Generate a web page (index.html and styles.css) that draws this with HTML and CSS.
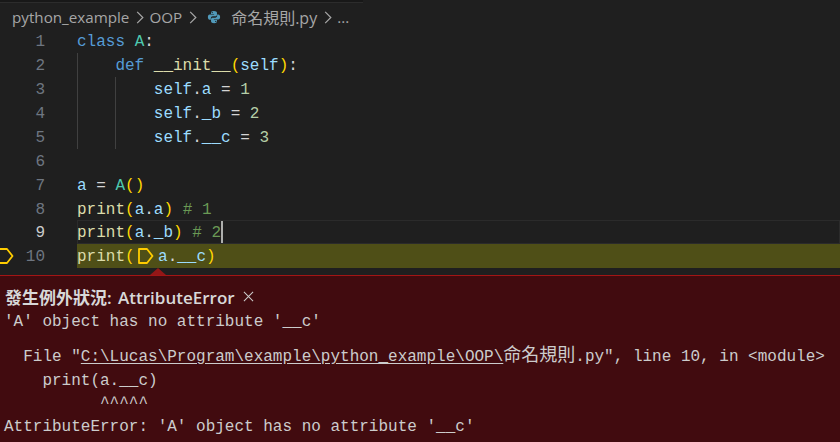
FILE: index.html
```html
<!DOCTYPE html>
<html lang="zh-Hant">
<head>
<meta charset="utf-8">
<title>命名規則.py</title>
<link rel="stylesheet" href="styles.css">
</head>
<body>
<div class="app">
  <div class="tabstrip"></div>
  <nav class="crumbs">
    <span>python_example</span>
    <svg class="chev" viewBox="0 0 8 16"><path d="M1 2l6 6-6 6"/></svg>
    <span>OOP</span>
    <svg class="chev" viewBox="0 0 8 16"><path d="M1 2l6 6-6 6"/></svg>
    <svg class="py" viewBox="0 0 16 16"><path d="M7.900 1C5 1 4.600 2 4.600 3.200v1.400h3.500v.6H3C1.800 5.200 1 6.300 1 8c0 1.800.8 3 2 3h1.400V9.300c0-1.200 1-2.200 2.200-2.200h3c1 0 1.800-.8 1.800-1.800V3.200C11.400 1.800 10 1 7.900 1zM6 2.200a.7.7 0 110 1.400.7.7 0 010-1.400z"/><path d="M8.100 15c2.900 0 3.300-1 3.300-2.200v-1.400H7.900v-.6H13c1.200 0 2-1.100 2-2.800 0-1.800-.8-3-2-3h-1.400v1.700c0 1.200-1 2.200-2.200 2.200h-3c-1 0-1.800.8-1.800 1.800v2.100C4.600 14.200 6 15 8.100 15zm1.900-1.200a.7.700 0 110-1.400.7.700 0 010 1.400z"/></svg>
    <span class="crumb-file">命名規則.py</span>
    <svg class="chev" viewBox="0 0 8 16"><path d="M1 2l6 6-6 6"/></svg>
    <span>...</span>
  </nav>
  <main class="editor">
    <div class="line"><span class="num">1</span><code><span class="k">class</span> <span class="t">A</span><span class="p">:</span></code></div>
    <div class="line"><span class="num">2</span><code class="g1"><span class="k">def</span> <span class="f">__init__</span><span class="b">(</span><span class="v">self</span><span class="b">)</span><span class="p">:</span></code></div>
    <div class="line"><span class="num">3</span><code class="g2"><span class="v">self</span><span class="p">.</span><span class="v">a</span> <span class="p">=</span> <span class="n">1</span></code></div>
    <div class="line"><span class="num">4</span><code class="g2"><span class="v">self</span><span class="p">.</span><span class="v">_b</span> <span class="p">=</span> <span class="n">2</span></code></div>
    <div class="line"><span class="num">5</span><code class="g2"><span class="v">self</span><span class="p">.</span><span class="v">__c</span> <span class="p">=</span> <span class="n">3</span></code></div>
    <div class="line"><span class="num">6</span><code></code></div>
    <div class="line"><span class="num">7</span><code><span class="v">a</span> <span class="p">=</span> <span class="t">A</span><span class="b">()</span></code></div>
    <div class="line"><span class="num">8</span><code><span class="f">print</span><span class="b">(</span><span class="v">a</span><span class="p">.</span><span class="v">a</span><span class="b">)</span> <span class="c"># 1</span></code></div>
    <div class="line current"><span class="num">9</span><code><span class="f">print</span><span class="b">(</span><span class="v">a</span><span class="p">.</span><span class="v">_b</span><span class="b">)</span> <span class="c"># 2</span><span class="caret"></span></code></div>
    <div class="line stopped">
      <svg class="stop gutter-stop" viewBox="0 0 16 16"><path d="M1 1h8l5.500 7-5.500 7H1z"/></svg>
      <span class="num">10</span>
      <code><span class="f">print</span><span class="b">(</span><svg class="stop inline-stop" viewBox="0 0 16 16"><path d="M1 1h8l5.500 7-5.500 7H1z"/></svg><span class="v">a</span><span class="p">.</span><span class="v">__c</span><span class="b">)</span></code>
    </div>
  </main>
  <section class="peek">
    <span class="arrow"></span>
    <header class="peek-head"><strong><span class="cjk">發生例外狀況:</span> AttributeError</strong><svg class="close" viewBox="0 0 12 12"><path d="M1 1l10 10M11 1L1 11"/></svg></header>
    <p class="msg">'A' object has no attribute '__c'</p>
    <div class="trace">
      <div class="tl">  File "<a href="#">C:\Lucas\Program\example\python_example\OOP\</a><span class="cjk-mono">命名規則</span>.py", line 10, in &lt;module&gt;</div>
      <div class="tl">    print(a.__c)</div>
      <div class="tl">          ^^^^^</div>
      <div class="tl">AttributeError: 'A' object has no attribute '__c'</div>
    </div>
  </section>
</div>
</body>
</html>
```
FILE: styles.css
```css
* { box-sizing: border-box; }
html, body { margin: 0; height: 100%; }
body { background: #1f1f1f; overflow: hidden; }
.app { width: 840px; height: 442px; display: flex; flex-direction: column; }
.tabstrip { height: 3px; width: 363px; border-bottom: 1px solid #2c2c2c; background: #181818; }
.crumbs { height: 26.300px; padding-top: 2px; display: flex; align-items: center; padding-left: 12px; color: #a6a6a6; font: 15.200px "Open Sans", "Noto Sans CJK TC", sans-serif; white-space: nowrap; }
.chev { width: 8px; height: 15px; margin: 0 5px 0 7px; fill: none; stroke: #a6a6a6; stroke-width: 1.3; }
.py { width: 14px; height: 14px; margin: 0 10px 0 5px; fill: #519aba; }
.crumb-file { font-size: 16px; }
.editor { height: 239px; font: 16px/26px "Liberation Mono", "Noto Sans CJK TC", monospace; }
.line { position: relative; height: 23.900px; display: flex; }
.num { width: 45px; margin-right: 32px; text-align: right; color: #6e7681; }
code { font: inherit; flex: 1; white-space: pre; position: relative; color: #ccc; }
.g1 { padding-left: 38.400px; }
.g2 { padding-left: 76.800px; }
.line:nth-child(n+2):nth-child(-n+5) code { box-shadow: inset 1px 0 #404040; }
.g2::before { content: ""; position: absolute; left: 38px; top: 0; bottom: 0; width: 1px; background: #404040; }
.current code { outline: 1px solid #2b2b2b; outline-offset: -1px; }
.current .num { color: #ccc; }
.caret { display: inline-block; width: 2px; height: 24px; background: #aeafad; vertical-align: top; }
.stopped code { background: #4f4f17; height: 23.900px; display: flex; align-items: flex-start; }
.stop { fill: none; stroke: #ffcc00; stroke-width: 1.800; stroke-linejoin: round; }
.gutter-stop { position: absolute; left: -2px; top: 4px; width: 16px; height: 16px; }
.inline-stop { width: 16px; height: 16px; margin: 4px 4.400px 0 3px; flex: none; }
.k { color: #569cd6; }
.t { color: #4ec9b0; }
.f { color: #dcdcaa; }
.v { color: #9cdcfe; }
.n { color: #b5cea8; }
.c { color: #6a9955; }
.b { color: #ffd700; }
.p { color: #d4d4d4; }
.peek { position: relative; flex: 1; margin-top: 7px; background: #410b0f; border-top: 1px solid #a31515; color: #ccc; }
.arrow { position: absolute; left: 150px; top: -8px; width: 0; height: 0; border: 8px solid transparent; border-top: 0; border-bottom: 7px solid #931717; }
.peek-head { height: 33px; padding: 8px 0 0 5px; display: flex; align-items: center; font: 17px "Open Sans", "Noto Sans CJK TC", sans-serif; color: #d8d8d8; }
.peek-head strong { font-weight: 600; white-space: nowrap; }
.cjk { margin-right: 2px; }
.close { width: 11px; height: 11px; margin-left: 8px; fill: none; stroke: #ccc; stroke-width: 1.1; }
.msg { margin: 0; padding: 1px 0 0 4px; font: 16px/24px "Liberation Mono", monospace; white-space: pre; }
.trace { padding: 12px 0 0 4px; font: 16px/23.330px "Liberation Mono", "Noto Sans CJK TC", monospace; }
.tl { height: 23.330px; white-space: pre; }
.trace a { color: inherit; text-decoration: underline; text-underline-offset: 2px; }
.cjk-mono { font-size: 18px; line-height: 1; }
```
